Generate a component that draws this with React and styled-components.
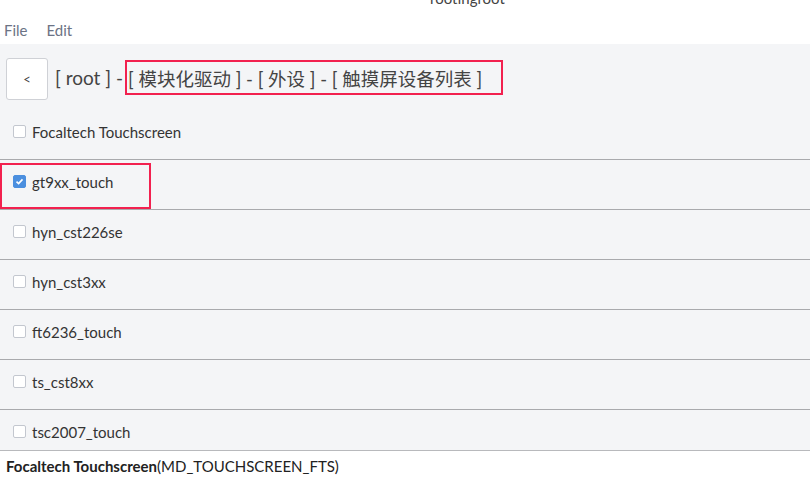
import React, { useState } from 'react'
import styled, { createGlobalStyle, css } from 'styled-components'

const GlobalStyle = createGlobalStyle`
  html, body {
    margin: 0;
    padding: 0;
    width: 810px;
    height: 480px;
    overflow: hidden;
    font-family: Lato, "Noto Sans", "Noto Sans CJK SC", sans-serif;
  }
`

const Window = styled.div`
  width: 810px;
  height: 480px;
  display: flex;
  flex-direction: column;
  background: #f4f5f7;
  overflow: hidden;
`

const TitleBar = styled.div`
  height: 0;
  position: relative;
  background: #fff;
`

const TitleText = styled.div`
  position: absolute;
  top: -11px;
  left: 430px;
  font-size: 15px;
  color: #444;
`

const MenuBar = styled.div`
  height: 44px;
  background: #fff;
  display: flex;
  align-items: flex-end;
  gap: 19px;
  padding: 0 0 5px 4px;
  box-sizing: border-box;
`

const MenuItem = styled.span`
  font-size: 15px;
  color: #6c7385;
`

const Crumbs = styled.div`
  height: 66px;
  display: flex;
  align-items: flex-start;
  padding: 14px 0 0 6px;
  box-sizing: border-box;
  gap: 7px;
`

const BackButton = styled.button`
  width: 42px;
  height: 42px;
  background: #fff;
  border: 1px solid #cfd1d6;
  border-radius: 3px;
  font-family: inherit;
  font-size: 13px;
  color: #444;
  padding: 0;
`

const CrumbText = styled.div`
  display: flex;
  align-items: flex-start;
  height: 42px;
  font-size: 19px;
  color: #444;
  white-space: pre;
`

const Plain = styled.span`
  line-height: 40px;
`

const Highlight = styled.span`
  display: inline-flex;
  align-items: center;
  height: 35px;
  box-sizing: border-box;
  border: 2px solid #f2214f;
  font-size: 18.5px;
  padding: 1px 19px 0 1px;
  margin: 2px 0 0 2px;
`

const List = styled.div`
  flex: 1;
  overflow: hidden;
`

const Row = styled.label`
  height: 50px;
  box-sizing: border-box;
  display: flex;
  align-items: center;
  padding: 0 0 6px 13px;
  border-bottom: 1px solid #a9aaad;
  gap: 6px;
  font-size: 15px;
  color: #333;
  position: relative;
`

const Marker = styled.span`
  position: absolute;
  left: 0;
  top: 3px;
  width: 151px;
  height: 46px;
  border: 2px solid #f2214f;
  box-sizing: border-box;
`

const Box = styled.span`
  width: 13px;
  height: 13px;
  box-sizing: border-box;
  border-radius: 2px;
  display: inline-flex;
  align-items: center;
  justify-content: center;
  background: #fff;
  border: 1px solid #c3c7cf;
  ${p => p.checked && css`
    background: #4b8fdf;
    border-color: #4b8fdf;
  `}
`

const StatusBar = styled.div`
  height: 29px;
  flex: none;
  background: #fff;
  border-top: 1px solid #b8b9bc;
  display: flex;
  align-items: center;
  padding: 0 0 0 6px;
  font-size: 15px;
  color: #222;
`

const items = [
  'Focaltech Touchscreen',
  'gt9xx_touch',
  'hyn_cst226se',
  'hyn_cst3xx',
  'ft6236_touch',
  'ts_cst8xx',
  'tsc2007_touch',
]

const Check = ({ checked }) => (
  <Box checked={checked}>
    {checked && (
      <svg width="9" height="9" viewBox="0 0 9 9">
        <path d="M1.5 4.6 L3.6 6.6 L7.5 2.4" fill="none" stroke="#fff" strokeWidth="1.6" />
      </svg>
    )}
  </Box>
)

export default function App() {
  const [selected] = useState({ gt9xx_touch: true })
  return (
    <Window>
      <GlobalStyle />
      <TitleBar><TitleText>rootingroot</TitleText></TitleBar>
      <MenuBar>
        <MenuItem>File</MenuItem>
        <MenuItem>Edit</MenuItem>
      </MenuBar>
      <Crumbs>
        <BackButton>&lt;</BackButton>
        <CrumbText>
          <Plain>[ root ] -</Plain>
          <Highlight>[ 模块化驱动 ] - [ 外设 ] - [ 触摸屏设备列表 ]</Highlight>
        </CrumbText>
      </Crumbs>
      <List>
        {items.map(name => (
          <Row key={name}>
            {selected[name] && <Marker />}
            <Check checked={!!selected[name]} />
            {name}
          </Row>
        ))}
      </List>
      <StatusBar>
        <b>Focaltech Touchscreen</b>(MD_TOUCHSCREEN_FTS)
      </StatusBar>
    </Window>
  )
}
